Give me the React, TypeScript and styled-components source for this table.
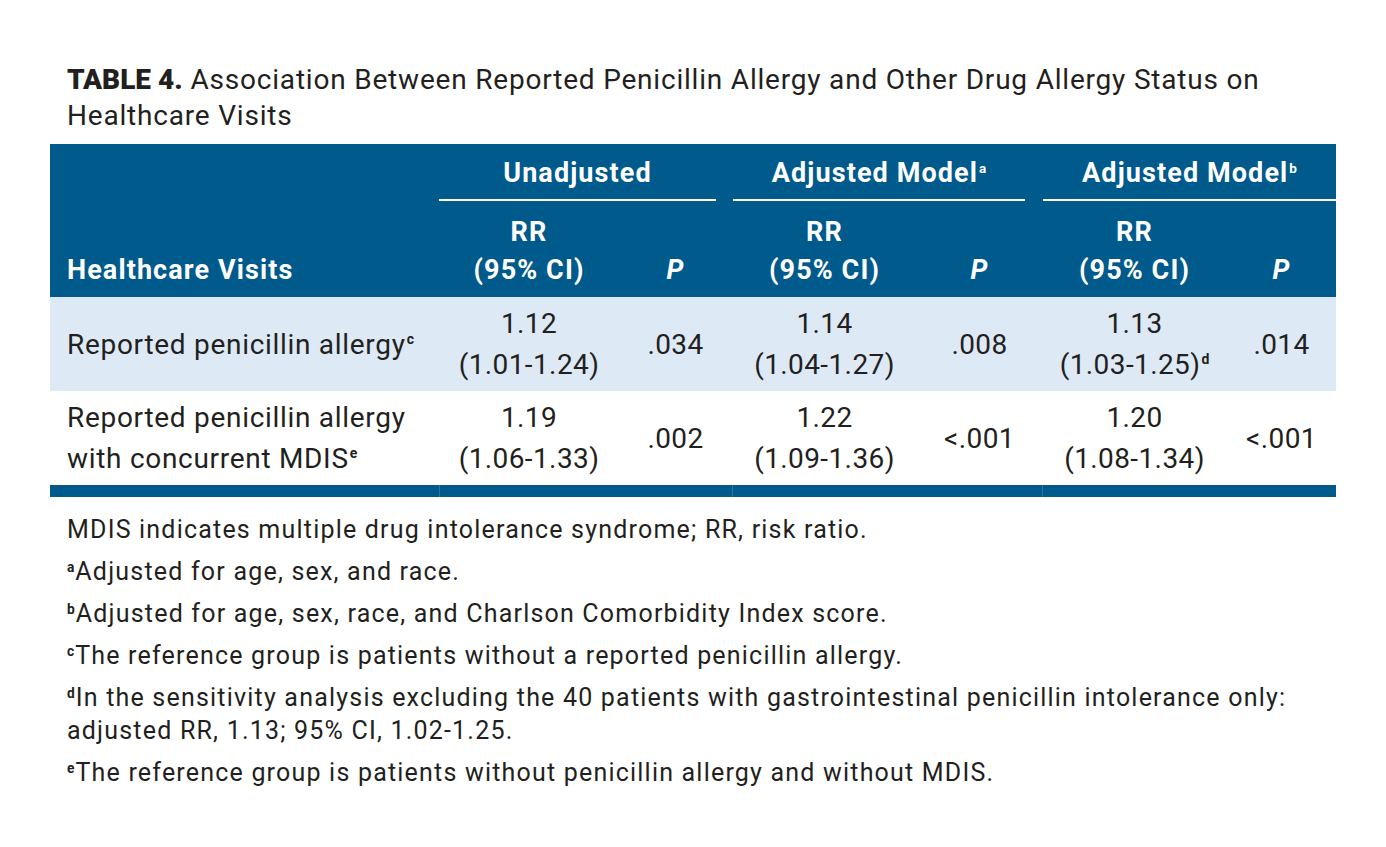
import React from 'react';
import styled, { createGlobalStyle } from 'styled-components';

const DARK = '#005a8c';
const LIGHT = '#dde9f5';
const INK = '#231f20';

interface Cell {
  rr: string;
  ci: string;
  ciMark?: string;
  p: string;
}

interface Row {
  lines: string[];
  mark: string;
  cells: Cell[];
  shaded: boolean;
}

const rows: Row[] = [
  {
    lines: ['Reported penicillin allergy'],
    mark: 'c',
    shaded: true,
    cells: [
      { rr: '1.12', ci: '(1.01-1.24)', p: '.034' },
      { rr: '1.14', ci: '(1.04-1.27)', p: '.008' },
      { rr: '1.13', ci: '(1.03-1.25)', ciMark: 'd', p: '.014' },
    ],
  },
  {
    lines: ['Reported penicillin allergy', 'with concurrent MDIS'],
    mark: 'e',
    shaded: false,
    cells: [
      { rr: '1.19', ci: '(1.06-1.33)', p: '.002' },
      { rr: '1.22', ci: '(1.09-1.36)', p: '<.001' },
      { rr: '1.20', ci: '(1.08-1.34)', p: '<.001' },
    ],
  },
];

const notes: { mark?: string; text: string }[] = [
  { text: 'MDIS indicates multiple drug intolerance syndrome; RR, risk ratio.' },
  { mark: 'a', text: 'Adjusted for age, sex, and race.' },
  { mark: 'b', text: 'Adjusted for age, sex, race, and Charlson Comorbidity Index score.' },
  { mark: 'c', text: 'The reference group is patients without a reported penicillin allergy.' },
  {
    mark: 'd',
    text: 'In the sensitivity analysis excluding the 40 patients with gastrointestinal penicillin intolerance only: adjusted RR, 1.13; 95% CI, 1.02-1.25.',
  },
  { mark: 'e', text: 'The reference group is patients without penicillin allergy and without MDIS.' },
];

// label, then RR / P per model group
const colWidths = [389, 180, 113, 185, 125, 185, 109];

const App = (): JSX.Element => {
  return (
    <Page>
      <GlobalStyle />
      <Title>
        <TitleTag>TABLE 4.</TitleTag> Association Between Reported Penicillin Allergy and Other Drug Allergy Status on
        Healthcare Visits
      </Title>
      <Table>
        <colgroup>
          {colWidths.map((w, i) => (
            <col key={i} style={{ width: w }} />
          ))}
        </colgroup>
        <thead>
          <tr>
            <GroupCell />
            <GroupCell colSpan={2}>
              <GroupLabel side="left">Unadjusted</GroupLabel>
            </GroupCell>
            <GroupCell colSpan={2}>
              <GroupLabel side="mid">
                Adjusted Model<Sup>a</Sup>
              </GroupLabel>
            </GroupCell>
            <GroupCell colSpan={2}>
              <GroupLabel side="right">
                Adjusted Model<Sup>b</Sup>
              </GroupLabel>
            </GroupCell>
          </tr>
          <tr>
            <SubHead align="left">Healthcare Visits</SubHead>
            {[0, 1, 2].map((i) => (
              <React.Fragment key={i}>
                <SubHead>
                  RR
                  <br />
                  (95% CI)
                </SubHead>
                <SubHead>
                  <em>P</em>
                </SubHead>
              </React.Fragment>
            ))}
          </tr>
        </thead>
        <tbody>
          {rows.map((row, r) => (
            <BodyRow key={r} shaded={row.shaded}>
              <LabelCell>
                {row.lines.map((l, i) => (
                  <React.Fragment key={i}>
                    {i > 0 && <br />}
                    {l}
                  </React.Fragment>
                ))}
                <Sup>{row.mark}</Sup>
              </LabelCell>
              {row.cells.map((c, i) => (
                <React.Fragment key={i}>
                  <ValueCell>
                    {c.rr}
                    <br />
                    {c.ci}
                    {c.ciMark && <Sup>{c.ciMark}</Sup>}
                  </ValueCell>
                  <ValueCell>{c.p}</ValueCell>
                </React.Fragment>
              ))}
            </BodyRow>
          ))}
        </tbody>
        <tfoot>
          <tr>
            <FootCell />
            <FootCell colSpan={2} divided />
            <FootCell colSpan={2} divided />
            <FootCell colSpan={2} divided />
          </tr>
        </tfoot>
      </Table>
      <Notes>
        {notes.map((n, i) => (
          <Note key={i}>
            {n.mark && <NoteMark>{n.mark}</NoteMark>}
            {n.text}
          </Note>
        ))}
      </Notes>
    </Page>
  );
};

export default App;

const GlobalStyle = createGlobalStyle`
  body {
    margin: 0;
    background: #ffffff;
    color: ${INK};
    font-family: Roboto, 'Liberation Sans', sans-serif;
  }
`;

const Page = styled.div`
  width: 1286px;
  padding: 62px 0 40px 50px;
`;

const Title = styled.div`
  padding: 0 17px;
  font-size: 28px;
  line-height: 36px;
  font-weight: 400;
  letter-spacing: 0.8px;
  margin-bottom: 10px;
`;

const TitleTag = styled.span`
  font-weight: 900;
  letter-spacing: 0;
`;

const Table = styled.table`
  width: 1286px;
  border-collapse: collapse;
  table-layout: fixed;
  font-size: 28px;
`;

const GroupCell = styled.th`
  background: ${DARK};
  color: #ffffff;
  padding: 0;
  height: 57px;
  vertical-align: bottom;
  font-size: 27px;
  font-weight: 700;
  letter-spacing: 1.1px;
`;

const GroupLabel = styled.div<{ side: 'left' | 'mid' | 'right' }>`
  border-bottom: 2px solid #ffffff;
  padding-bottom: 11px;
  text-align: center;
  line-height: 30px;
  margin: ${(p) => (p.side === 'left' ? '0 16px 0 0' : p.side === 'mid' ? '0 17px 0 1px' : '0 0 0 1px')};
`;

const SubHead = styled.th<{ align?: 'left' }>`
  background: ${DARK};
  color: #ffffff;
  font-size: 27px;
  font-weight: 700;
  letter-spacing: 1.1px;
  text-align: ${(p) => p.align || 'center'};
  padding: 12px 0 8px ${(p) => (p.align ? '17px' : '0')};
  line-height: 38px;
  vertical-align: bottom;

  em {
    font-style: italic;
  }
`;

const BodyRow = styled.tr<{ shaded: boolean }>`
  background: ${(p) => (p.shaded ? LIGHT : '#ffffff')};
`;

const LabelCell = styled.td`
  padding: 6px 0 6px 17px;
  line-height: 41px;
  letter-spacing: 0.7px;
  vertical-align: middle;
  font-weight: 400;
`;

const ValueCell = styled.td`
  padding: 6px 0;
  line-height: 41px;
  letter-spacing: 0.4px;
  text-align: center;
  vertical-align: middle;
`;

const FootCell = styled.td<{ divided?: boolean }>`
  background: ${DARK};
  height: 12px;
  padding: 0;
  border-left: ${(p) => (p.divided ? '1px solid #2b74a0' : 'none')};
`;

const Sup = styled.sup`
  font-size: 0.5em;
  font-weight: 700;
  letter-spacing: 0;
  vertical-align: 0.7em;
  line-height: 0;
  margin-left: 1px;
`;

const Notes = styled.div`
  padding: 16px 17px 0;
  font-size: 25px;
  line-height: 33px;
  letter-spacing: 1.2px;
`;

const Note = styled.p`
  margin: 0 0 9px;
`;

const NoteMark = styled.sup`
  font-size: 0.55em;
  font-weight: 700;
  letter-spacing: 0;
  vertical-align: 0.6em;
  line-height: 0;
  margin-right: 1px;
`;
